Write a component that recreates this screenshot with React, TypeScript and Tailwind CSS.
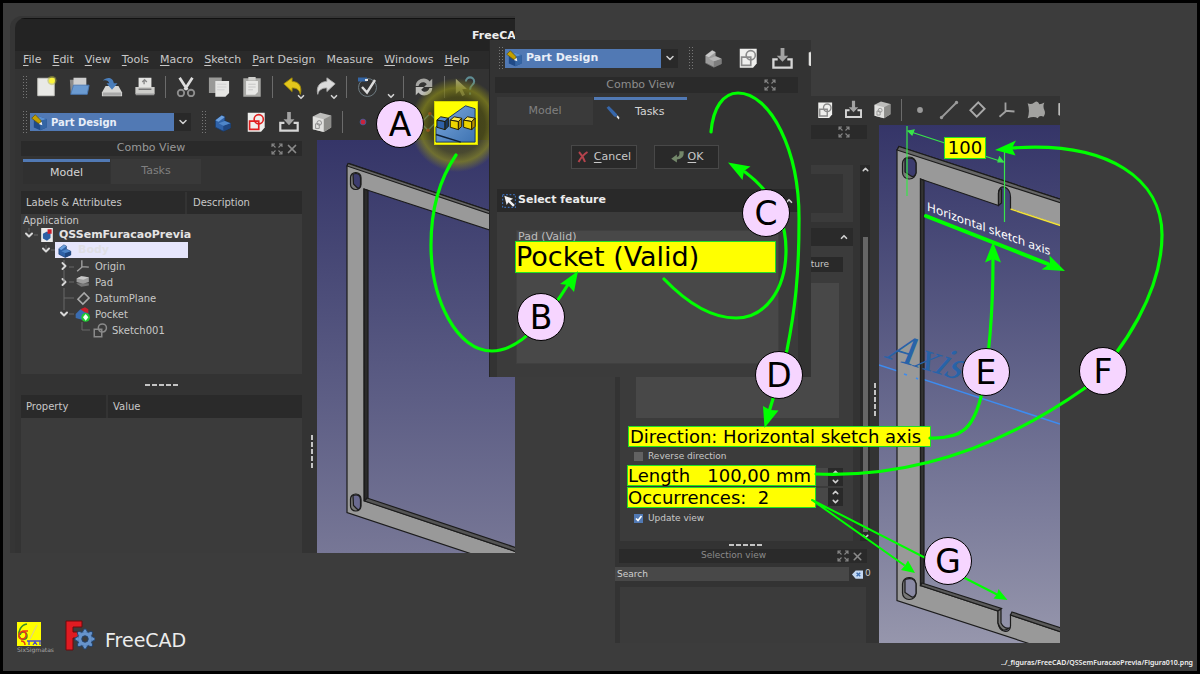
import type { ReactNode } from "react";
import { X, ChevronDown, ChevronUp, ChevronRight } from "lucide-react";

// ---------- icons ----------

const Svg = ({ size, children }: { size: number; children: ReactNode }) => (
  <svg width={size} height={size} viewBox="0 0 24 24" fill="none" className="shrink-0" aria-hidden="true">
    {children}
  </svg>
);

const NewIcon = () => (
  <Svg size={22}>
    <path d="M3 2.500h18v19H3z" fill="#e9e9e6" stroke="#c9c9c4" />
    <circle cx="18.500" cy="5" r="5" fill="#b8b83a" opacity=".5" />
    <circle cx="18.500" cy="5" r="3.200" fill="#fbf43a" />
  </Svg>
);

const OpenIcon = () => (
  <Svg size={22}>
    <path d="M2 4h7l2 2v13H3z" fill="#8b8b8b" />
    <path d="M6 2h14v12H6z" fill="#cfcfcf" />
    <path d="M6 10h17l-2 10H3z" fill="#6b9bd2" stroke="#4b79b4" />
  </Svg>
);

const SaveIcon = () => (
  <Svg size={22}>
    <path d="M5 11h14l4 7v4H1v-4z" fill="#d6d6d4" />
    <path d="M2 18h20v3.500H2z" fill="#a8a8a8" />
    <path d="M2 5c4-4 11-4 12 3h4l-6 7-6-7h3c-1-3-3-4-7-3z" fill="#4a7ebb" />
  </Svg>
);

const PrintIcon = () => (
  <Svg size={22}>
    <path d="M5 2h14v10H5z" fill="#e4e4e2" />
    <path d="M11 9V5M9 6.500l2.500-2.500L14 6.500" stroke="#888" strokeWidth="1.500" />
    <path d="M1.500 12h21v8h-21z" fill="#cdcdca" />
    <path d="M5 14.500h14" stroke="#777" strokeWidth="1.500" />
    <path d="M2 20h20" stroke="#999" strokeWidth="2" />
  </Svg>
);

const CutIcon = () => (
  <Svg size={22}>
    <path d="M5 2l8.500 13M19 2l-8.500 13" stroke="#dedede" strokeWidth="3" />
    <circle cx="6.500" cy="18.500" r="3.500" stroke="#8e8e8e" strokeWidth="2" />
    <circle cx="17.500" cy="18.500" r="3.500" stroke="#8e8e8e" strokeWidth="2" />
  </Svg>
);

const CopyIcon = () => (
  <Svg size={22}>
    <path d="M1 1.500h14v17H1z" fill="#9a9a98" />
    <path d="M8 5.500h15v13l-4 4H8z" fill="#e6e6e4" />
    <path d="M10 9h10M10 12h10M10 15h8" stroke="#cfcfcf" />
  </Svg>
);

const PasteIcon = () => (
  <Svg size={22}>
    <path d="M2.500 2.500h19v20h-19z" fill="#a9a9a6" />
    <path d="M5.500 5.500h13v12l-3 3h-10z" fill="#e8e8e6" />
    <path d="M8 1h8v4H8z" fill="#cfcfcc" />
    <path d="M8 9h8M8 12h8M8 15h5" stroke="#c4c4c4" />
  </Svg>
);

const UndoIcon = () => (
  <Svg size={22}>
    <path d="M2 8.500L11 2v4c8 0 11 6 9 14-1-5-4-7-9-7v4z" fill="#e3c61c" stroke="#a38c08" />
  </Svg>
);

const RedoIcon = () => (
  <Svg size={22}>
    <path d="M22 8.500L13 2v4C5 6 1 12 3 20c1-5 5-7 10-7v4z" fill="#dcdcdc" stroke="#aaa" />
  </Svg>
);

const CheckIcon = () => (
  <Svg size={24}>
    <circle cx="12.500" cy="12.500" r="9" stroke="#6d7a80" strokeWidth="1" />
    <path d="M3 2.500h9v4H3z" fill="#3465a4" />
    <path d="M10 4h3v2h-3z" fill="#e8e8e8" />
    <path d="M7 12l5 5.500L20 5" stroke="#dcdcdc" strokeWidth="2.400" />
  </Svg>
);

const RefreshIcon = () => (
  <Svg size={22}>
    <path d="M3 11C3 3 14 0 18 6l3-3v9h-9l3-3c-3-4-8-2-9 2z" fill="#a5a5a2" />
    <path d="M21 13c0 8-11 11-15 5l-3 3v-9h9l-3 3c3 4 8 2 9-2z" fill="#bdbdba" />
  </Svg>
);

const WhatsThisIcon = () => (
  <Svg size={22}>
    <path d="M2 3l12 11-5 .500 3 6-3 1.500-3-6-4 3.500z" fill="#a3a27c" />
    <path d="M13 6c0-6 9-6 9 0 0 4-4.500 3.500-4.500 9M17.500 18v2.500" stroke="#5f8d94" strokeWidth="2.200" />
  </Svg>
);

const WorkbenchIcon = () => (
  <Svg size={17}>
    <path d="M4 7l9-3 9 3v12l-9 4-9-4z" fill="#204a87" />
    <path d="M13 10l9-3v12l-9 4z" fill="#3465a4" />
    <path d="M4 7l9-3 9 3-9 3z" fill="#5a8fd0" />
    <path d="M1 6l5-5 8 8v4h-4z" fill="#c4a000" stroke="#635405" />
    <path d="M11 14l5 2-1-5z" fill="#eee" />
  </Svg>
);

const BodyIcon = ({ size = 22, gray = false }: { size?: number; gray?: boolean }) => (
  <Svg size={size}>
    <path d="M3 9l8-6 4 2v5l7 3v6l-9 4-10-5z" fill={gray ? "#9c9c9c" : "#2f62a8"} stroke={gray ? "#6e6e6e" : "#173a6b"} />
    <path d="M3 9l8-6 4 2-8 6z" fill={gray ? "#c9c9c9" : "#6da0dd"} />
    <path d="M13 16l9-3v6l-9 4z" fill={gray ? "#7d7d7d" : "#1f4680"} />
    <path d="M7 13l8-3 7 3-9 3z" fill={gray ? "#b5b5b5" : "#4f86c9"} />
  </Svg>
);

const SketchIcon = ({ size = 22, color = "#e02020" }: { size?: number; color?: string }) => (
  <Svg size={size}>
    <path d="M3 2h18.500v16l-4 4.500H3z" fill="#efefed" />
    <path d="M5 11h10v9H5z" stroke={color} strokeWidth="1.800" />
    <circle cx="15" cy="9" r="5" stroke={color} strokeWidth="1.800" />
  </Svg>
);

const ImportIcon = ({ size = 22 }: { size?: number }) => (
  <Svg size={size}>
    <path d="M10 1h4v8h4l-6 6.500L6 9h4z" fill="#a3a3a3" />
    <path d="M7 13H2.500v8.500h19V13H17" stroke="#d6d6d6" strokeWidth="2.400" />
  </Svg>
);

const BoxIcon = ({ size = 22 }: { size?: number }) => (
  <Svg size={size}>
    <path d="M2 6l8-4 12 3v13l-8 5L2 20z" fill="#bdbdbb" />
    <path d="M2 6l12 3v14L2 20z" fill="#e1e1df" />
    <path d="M14 9l8-4v13l-8 5z" fill="#8d8d8a" />
    <path d="M5 14h4v5H5z" stroke="#888" />
    <circle cx="9" cy="13" r="2.500" stroke="#888" />
  </Svg>
);

const DiamondIcon = ({ size = 22, color = "#a9a9a9" }: { size?: number; color?: string }) => (
  <Svg size={size}>
    <path d="M13 3l8 8-10 10-8-8z" stroke={color} strokeWidth="2.400" />
  </Svg>
);

const AxesIcon = ({ size = 22 }: { size?: number }) => (
  <Svg size={size}>
    <path d="M10 2v12l-8 7M10 13l12 1" stroke="#a0a0a0" strokeWidth="2.400" />
  </Svg>
);

const PadIcon = () => (
  <Svg size={14}>
    <path d="M1 15l8 5 13-2v-4H1z" fill="#777" />
    <path d="M1 6l8-4 13 2v8l-10 3L1 12z" fill="#9d9d9d" />
    <path d="M1 6l8-4 13 2-9 4z" fill="#c9c9c9" />
  </Svg>
);

const PocketIcon = () => (
  <Svg size={16}>
    <path d="M1 12l7-7 12 3v8l-8 5L1 18z" fill="#3a6cb0" />
    <path d="M8 5l7-3 5 3v6l-6-2z" fill="#cc1f2b" />
    <circle cx="16" cy="17" r="6.500" fill="#20c832" />
    <path d="M16 12l4 5-4 5-4-5z" fill="#f3fff3" />
  </Svg>
);

const DocIcon = () => (
  <Svg size={14}>
    <path d="M2 0h20v24H2z" fill="#ececec" />
    <path d="M5 10l7-4 6 3v8l-6 5-7-4z" fill="#2c5fa5" />
    <path d="M13 2h7v8h-7z" fill="#cc1f2b" />
  </Svg>
);

const SketchLeafIcon = () => (
  <Svg size={15}>
    <path d="M2 10h12v12H2z" stroke="#8a8a8a" strokeWidth="2.400" />
    <circle cx="15" cy="8" r="6.500" stroke="#8a8a8a" strokeWidth="2.400" />
  </Svg>
);

const FloatIcon = () => (
  <Svg size={12}>
    <path
      d="M2 8V2h6M2 2l7 7M22 8V2h-6M22 2l-7 7M2 16v6h6M2 22l7-7M22 16v6h-6M22 22l-7-7"
      stroke="#858585"
      strokeWidth="2.200"
    />
  </Svg>
);

const cubes = [
  { x: 2, top: "#5a8dd0", face: "#2f62a8", side: "#163965" },
  { x: 16, top: "#fce94f", face: "#edd400", side: "#b79300" },
  { x: 30, top: "#fce94f", face: "#edd400", side: "#b79300" },
];

const PatternIcon = () => (
  <svg viewBox="0 0 44 44" className="size-full" aria-hidden="true">
    <defs>
      <linearGradient id="slope" x1="0" y1="0" x2="1" y2="1">
        <stop offset="0" stopColor="#7ba8dc" />
        <stop offset="1" stopColor="#3e73b2" />
      </linearGradient>
    </defs>
    <path d="M0 0h44v44H0z" fill="#ffff00" />
    <path d="M1 26L32 4l10 3v35H1z" fill="url(#slope)" stroke="#16355e" strokeWidth="1" />
    <path d="M1 34l26 8" stroke="#0d2036" strokeWidth="1.500" />
    {cubes.map((c) => (
      <g key={c.x} transform={`translate(${c.x} 15)`} stroke="#221c02" strokeWidth="1" strokeLinejoin="round">
        <path d="M0 4l4-3.500 8 1.500L8.500 5.500z" fill={c.top} />
        <path d="M0 4l8.500 1.500V14L0 11.500z" fill={c.face} />
        <path d="M8.500 5.500L12 2v8.500L8.500 14z" fill={c.side} />
      </g>
    ))}
  </svg>
);

// ---------- small shared parts ----------

const Handle = () => (
  <span className="grid shrink-0 grid-cols-2 gap-[2px]" aria-hidden="true">
    {Array.from({ length: 16 }, (_, i) => (
      <span key={i} className="size-[1px] bg-[#777]" />
    ))}
  </span>
);

const Separator = () => (
  <span className="flex w-2 shrink-0 justify-center">
    <span className="h-[22px] w-px bg-[#6b6b6b]" />
  </span>
);

const Tool = ({ label, wide = true, menu = false, children }: { label: string; wide?: boolean; menu?: boolean; children: ReactNode }) => (
  <button aria-label={label} className={`relative flex shrink-0 items-center justify-center ${wide ? "w-[33px]" : "w-[29px]"}`}>
    {children}
    {menu && <ChevronDown size={10} strokeWidth={4} className="absolute right-[3px] -bottom-1 text-[#d0d0d0]" />}
  </button>
);

const Dashes = ({ vertical = false }: { vertical?: boolean }) => (
  <span className={`flex gap-[2px] ${vertical ? "flex-col" : ""}`} aria-hidden="true">
    {Array.from({ length: 5 }, (_, i) => (
      <span key={i} className={`bg-[#c4c4c4] ${vertical ? "h-[5px] w-[2px]" : "h-[2px] w-[5px]"}`} />
    ))}
  </span>
);

const WorkbenchSelect = ({ id, size }: { id: string; size: string }) => (
  <label htmlFor={id} className="flex flex-1 items-stretch">
    <span className="flex items-center bg-[#5179b4] pl-px">
      <WorkbenchIcon />
    </span>
    <select id={id} aria-label="Workbench" className={`min-w-0 flex-1 appearance-none bg-[#5179b4] px-[3px] font-bold text-[#e8eef8] ${size}`}>
      <option>Part Design</option>
    </select>
    <span className="flex w-[17px] items-center justify-center bg-[#292929]">
      <ChevronDown size={12} strokeWidth={3} className="text-[#d0d0d0]" />
    </span>
  </label>
);

// ---------- main window ----------

const menus = ["File", "Edit", "View", "Tools", "Macro", "Sketch", "Part Design", "Measure", "Windows", "Help"];

const indents = ["pl-[2px]", "pl-[19px]", "pl-[37px]", "pl-[54px]"];

const tree: { name: string; depth: number; icon: ReactNode; state: "open" | "closed" | "leaf" }[] = [
  { name: "Origin", depth: 2, icon: <AxesIcon size={14} />, state: "closed" },
  { name: "Pad", depth: 2, icon: <PadIcon />, state: "closed" },
  { name: "DatumPlane", depth: 2, icon: <DiamondIcon size={15} />, state: "leaf" },
  { name: "Pocket", depth: 2, icon: <PocketIcon />, state: "open" },
  { name: "Sketch001", depth: 3, icon: <SketchLeafIcon />, state: "leaf" },
];

const Arrow = ({ state }: { state: "open" | "closed" | "leaf" }) => (
  <span className="mr-[5px] flex w-3 shrink-0 justify-center text-[#d8d8d8]">
    {state === "open" && <ChevronDown size={12} strokeWidth={4} />}
    {state === "closed" && <ChevronRight size={12} strokeWidth={4} />}
  </span>
);

const MainView = () => (
  <svg viewBox="317 140 198 413" className="block size-full" aria-label="3D view" role="img">
    <g stroke="#1c1c1c" strokeWidth="1.200">
      <path d="M347 166L349 163.500 520 221V240L364 189V500.500L520 553V570L347 512.500z" fill="#999" />
      <path d="M348 163.500L520 221V224L347 166z" fill="#666" />
      <path d="M364 189l4 1.500V498.500l-3.500 2z" fill="#2b2b2b" />
      <path d="M367 498L520 549V553L364.500 501z" fill="#555" />
      {[181, 502.5].map((y) => (
        <g key={y}>
          <rect x="350.500" y={y - 8.5} width="10.500" height="17" rx="5" fill="#777" />
          <path d={`M353 ${y - 7}q7-2 7.500 4v7q-1 5-4 2l-3-3z`} fill={y < 300 ? "#3c3c6e" : "#6a6a90"} />
        </g>
      ))}
    </g>
  </svg>
);

const MainWindow = () => (
  <section className="absolute top-[18px] left-[15px] flex h-[535px] w-[500px] flex-col overflow-hidden rounded-tl-[10px] bg-[#333] text-[10px] text-[#c8c8c8]">
    <header className="h-[33px] shrink-0 border-t border-[#111] bg-[#232323] pl-[457px] text-[11px] leading-[33px] font-bold whitespace-nowrap text-[#eee]">
      FreeCAD
    </header>
    <nav className="flex h-[18px] shrink-0 items-center gap-[11px] bg-[#2a2a2a] pl-2 text-[11px]">
      {menus.map((m) => (
        <button key={m} className="shrink-0">
          {m === "Measure" ? m : <><u className="underline-offset-2">{m[0]}</u>{m.slice(1)}</>}
        </button>
      ))}
    </nav>
    <div className="flex h-[35px] shrink-0 items-center">
      <span className="flex w-[14px] justify-end pr-[2px]"><Handle /></span>
      <Tool label="New"><NewIcon /></Tool>
      <Tool label="Open"><OpenIcon /></Tool>
      <Tool label="Save"><SaveIcon /></Tool>
      <Tool label="Print"><PrintIcon /></Tool>
      <Separator />
      <Tool label="Cut"><CutIcon /></Tool>
      <Tool label="Copy"><CopyIcon /></Tool>
      <Tool label="Paste"><PasteIcon /></Tool>
      <Separator />
      <Tool label="Undo" menu><UndoIcon /></Tool>
      <Tool label="Redo" menu><RedoIcon /></Tool>
      <Separator />
      <Tool label="Check geometry"><CheckIcon /></Tool>
      <span className="flex h-5 w-4 items-end justify-center"><ChevronDown size={10} strokeWidth={4} className="-mb-1 text-[#d0d0d0]" /></span>
      <Separator />
      <Tool label="Refresh"><RefreshIcon /></Tool>
      <Separator />
      <Tool label="What's this?"><WhatsThisIcon /></Tool>
    </div>
    <div className="flex h-9 shrink-0 items-center">
      <span className="flex w-[14px] justify-end pr-[2px]"><Handle /></span>
      <div className="ml-px flex h-[18px] w-[161px]">
        <WorkbenchSelect id="workbench-main" size="text-[10px]" />
      </div>
      <span className="flex w-[15px] justify-end"><Handle /></span>
      <Tool label="Create body"><BodyIcon size={19} /></Tool>
      <Tool label="Create sketch"><SketchIcon /></Tool>
      <Tool label="Import"><ImportIcon /></Tool>
      <Tool label="Map sketch"><BoxIcon /></Tool>
      <Separator />
      <Tool label="Datum point">
        <Svg size={20}><circle cx="12" cy="12" r="3.500" fill="#c8243c" stroke="#3a5fa0" /></Svg>
      </Tool>
      <Tool label="Datum line">
        <Svg size={22}><path d="M3 21L21 3" stroke="#aaa" strokeWidth="2" /></Svg>
      </Tool>
      <Tool label="Datum plane">
        <Svg size={22}>
          <path d="M13 3l8 8-10 10-8-8z" stroke="#6ca0a8" strokeWidth="1.500" />
          <circle cx="13" cy="3" r="2" fill="#d8402c" />
          <circle cx="11" cy="21" r="2" fill="#d8402c" />
        </Svg>
      </Tool>
    </div>
    {/* yellow glow around the highlighted pattern tool */}
    <div className="absolute top-[59px] left-[394px] size-[96px] bg-[radial-gradient(circle,rgba(60,60,0,.45)_0,rgba(85,85,10,.6)_28px,rgba(135,135,25,.7)_37px,rgba(120,120,20,0)_47px)]" />
    <div className="flex min-h-0 flex-1">
      <div className="flex w-[287px] shrink-0 flex-col pl-[6px]">
        <div className="relative mt-[1px] flex h-[15px] items-center justify-center bg-[#2a2a2a] pr-[21px] text-[11px] text-[#999]">
          Combo View
          <span className="absolute right-[3px] flex items-center gap-[2px]">
            <FloatIcon />
            <X size={14} strokeWidth={3} className="text-[#8a8a8a]" />
          </span>
        </div>
        <div className="mt-[3px] flex h-[25px] pl-[2px] text-[11px]" role="tablist">
          <button role="tab" aria-selected="true" className="w-[87px] border-t-3 border-[#5179b4] bg-[#303030] text-[#d5d5d5]">Model</button>
          <button role="tab" aria-selected="false" className="ml-px w-[90px] bg-[#393939] text-[#808080]">Tasks</button>
        </div>
        <div className="mt-[7px] flex h-[23px] items-center bg-[#2a2a2a]">
          <span className="w-[166px] border-r-2 border-[#333] pl-[5px] leading-[22px]">Labels &amp; Attributes</span>
          <span className="pl-[6px]">Description</span>
        </div>
        <ul className="relative h-[160px] bg-[#3b3b3b]" role="tree">
          <svg viewBox="0 0 120 160" className="absolute top-0 left-0 h-[160px] w-[120px]" stroke="#686868" fill="none" aria-hidden="true">
            <path d="M8 14v4M13 21h4M25 31v4M30 36h4M43 46v3M43 56v12M43 74v22M48 53h5M48 68h5M43 84h10M48 100h5M61 108v8h8" />
          </svg>
          <li className="h-[14px] pl-[2px] leading-[14px]">Application</li>
          <li className="flex h-[14px] items-center pl-[2px]">
            <Arrow state="open" />
            <DocIcon />
            <b className="pl-[5px] text-[11px] text-[#e4e4e4]">QSSemFuracaoPrevia</b>
          </li>
          <li className="flex h-4 items-center pl-[19px]">
            <Arrow state="open" />
            <span className="-ml-[2px] flex h-4 w-[133px] items-center bg-[#e6e6fc] pl-[2px]">
              <BodyIcon size={15} />
              <b className="pl-[6px] text-[11px] text-[#dfdfe6]">Body</b>
            </span>
          </li>
          {tree.map((n) => (
            <li key={n.name} className={`flex h-4 items-center ${indents[n.depth]}`}>
              <Arrow state={n.state} />
              <span className="flex w-4 justify-center">{n.icon}</span>
              <span className="pl-1">{n.name}</span>
            </li>
          ))}
        </ul>
        <div className="flex h-[21px] shrink-0 items-center justify-center"><Dashes /></div>
        <table className="w-full border-collapse">
          <thead>
            <tr className="h-[23px] bg-[#2a2a2a] text-left">
              <th className="w-[86px] border-r-2 border-[#333] pl-[5px] font-normal">Property</th>
              <th className="pl-[5px] font-normal">Value</th>
            </tr>
          </thead>
        </table>
        <div className="flex-1 bg-[#3b3b3b]" />
      </div>
      <div className="flex w-[15px] shrink-0 flex-col items-center pt-[295px] pl-[5px]"><Dashes vertical /></div>
      <div className="flex-1 bg-linear-to-b from-[#353568] to-[#777796]"><MainView /></div>
    </div>
  </section>
);

// ---------- pattern parameters window ----------

const SpinButtons = () => (
  <span className="flex h-[18px] w-[15px] shrink-0 flex-col items-center justify-center bg-[#292929] text-[#d0d0d0]">
    <ChevronUp size={9} strokeWidth={4} />
    <ChevronDown size={9} strokeWidth={4} />
  </span>
);

const PatternView = () => (
  <svg viewBox="879 125 181 518" className="block size-full" aria-label="3D view" role="img">
    <path d="M879 365L1060 424" stroke="#3d8cf0" strokeWidth="1.500" />
    <g stroke="#1c1c1c" strokeWidth="1.200">
      <path
        d="M897 150L899 146.500 1064 200.500V227L1010.500 209V197c0-11-12-14-12-4v12.500L920.500 179V585.500L998 611v12c1 9 12 12 12.500 3V615L1064 633V655L897 600.500z"
        fill="#999"
      />
      <path d="M899 146.500L1064 200.500V204L897 150z" fill="#666" />
      <path d="M920.500 179l3.500 1.500V583l-3.500 2.500z" fill="#333" />
      <path d="M922 583L1001.500 608.500 998 611 920.500 585.500zM1012 612L1064 629V633L1010.500 615z" fill="#5a5a5a" />
      <path d="M998.500 205.500V193q1-5 3-4v14z" fill="#555" />
      <path d="M998 611l3-2v14q3 6 8 5-7 6-11-5z" fill="#777" />
      {[168, 588.5].map((y) => (
        <g key={y}>
          <rect x="902.500" y={y - 11} width="13.500" height="22" rx="6.500" fill="#777" />
          <path d={`M905 ${y - 9}q9-3 11 4v10q-2 5-5 3l-6-4z`} fill={y < 300 ? "#3c3c6e" : "#8a8aa4"} />
        </g>
      ))}
    </g>
    <path d="M1010.500 209L1062 226" stroke="#f0e040" strokeWidth="1.600" />
    <text
      fontSize="41"
      fill="#2863a8"
      className="font-['Liberation_Serif',serif]"
      transform="translate(883 357) rotate(17) skewX(-24)"
    >
      Axis
    </text>
    <path d="M904 374l3 1M916 378l2 1" stroke="#3d8cf0" strokeWidth="1.500" />
    <g stroke="#38e64a" strokeWidth="1.200" fill="#38e64a">
      <path d="M907 126v70M1004.500 150v72M908 131l95 31" />
      <path d="M908 131l6-1-2 5zM1003.500 162l-4-5-1.500 5z" />
    </g>
  </svg>
);

const PatternWindow = () => (
  <section className="absolute top-[96px] left-[615px] flex h-[547px] w-[445px] flex-col overflow-hidden bg-[#333] text-[9px] text-[#c8c8c8]">
    <div className="flex h-[27px] shrink-0 items-center pl-[195px]">
      <Tool label="Create sketch" wide={false}><SketchIcon size={18} color="#8a8a8a" /></Tool>
      <Tool label="Import" wide={false}><ImportIcon size={19} /></Tool>
      <Tool label="Map sketch" wide={false}><BoxIcon size={19} /></Tool>
      <Separator />
      <Tool label="Datum point" wide={false}>
        <Svg size={20}><circle cx="12" cy="12" r="3.500" fill="#9a9a9a" /></Svg>
      </Tool>
      <Tool label="Datum line" wide={false}>
        <Svg size={20}>
          <path d="M3 21L21 3" stroke="#9a9a9a" strokeWidth="2.200" />
          <circle cx="3" cy="21" r="2" fill="#9a9a9a" />
          <circle cx="21" cy="3" r="2" fill="#9a9a9a" />
        </Svg>
      </Tool>
      <Tool label="Datum plane" wide={false}><DiamondIcon size={19} /></Tool>
      <Tool label="Local coordinate system" wide={false}><AxesIcon size={18} /></Tool>
      <Tool label="Shape binder" wide={false}>
        <Svg size={20}><path d="M2 4q4 2 8-1t6 2q3 0 6-2-2 5 0 9t-1 8q-5-2-7 2-4-3-12 0 3-9 0-18z" fill="#a2a2a0" /></Svg>
      </Tool>
      <Tool label="Clone" wide={false}>
        <Svg size={20}><path d="M4 4l9-2 8 3v12l-9 5-8-4z" fill="#bcbcba" /></Svg>
      </Tool>
    </div>
    <div className="flex min-h-0 flex-1 pt-[2px]">
      <div className="flex w-[264px] shrink-0 flex-col">
        <div className="ml-1 flex h-[14px] w-[248px] shrink-0 items-center justify-end bg-[#2a2a2a] pr-[17px]"><FloatIcon /></div>
        <div className="mt-[26px] flex h-[376px] shrink-0">
          <div className="ml-[5px] flex w-[233px] flex-col">
            <div className="h-[57px] shrink-0 bg-[#3b3b3b] px-[10px] py-[9px]"><div className="h-full bg-[#333]" /></div>
            <div className="mt-[6px] flex h-[18px] shrink-0 items-center justify-end bg-[#2a2a2a] pr-1">
              <ChevronUp size={10} strokeWidth={4} className="text-[#d0d0d0]" />
            </div>
            <div className="flex flex-1 flex-col bg-[#3b3b3b] pr-[10px] pl-[7px]">
              <button className="mt-[11px] h-[15px] w-[110px] self-end bg-[#292929] pr-[14px] text-right">Remove feature</button>
              <div className="mt-[11px] mr-1 ml-[9px] h-[135px] shrink-0 bg-[#484848]" />
              <label className="mt-[32px] flex h-3 items-center gap-[5px] pl-[7px] leading-3">
                <input type="checkbox" className="size-[9px] appearance-none bg-[#626262]" />
                Reverse direction
              </label>
              <div className="mt-[6px] flex h-[18px] items-center">
                <input aria-label="Length" defaultValue="100,00 mm" className="h-[18px] min-w-0 flex-1 bg-[#484848] pl-[80px]" />
                <SpinButtons />
              </div>
              <div className="mt-[2px] flex h-[18px] items-center">
                <input aria-label="Occurrences" defaultValue="2" className="h-[18px] min-w-0 flex-1 bg-[#484848] pl-[80px]" />
                <SpinButtons />
              </div>
              <label className="mt-[6px] flex h-3 items-center gap-[5px] pl-[7px] leading-3">
                <span className="relative flex">
                  <input type="checkbox" defaultChecked className="size-[9px] appearance-none bg-[#5179b4]" />
                  <svg viewBox="0 0 9 9" className="pointer-events-none absolute size-[9px]" fill="none" aria-hidden="true">
                    <path d="M2 4.500l2 2L7.500 2" stroke="#fff" strokeWidth="1.600" />
                  </svg>
                </span>
                Update view
              </label>
            </div>
          </div>
          <div className="ml-[7px] flex w-[10px] flex-col items-center bg-[#292929] text-[#d0d0d0]">
            <ChevronUp size={9} strokeWidth={4} className="shrink-0" />
            <span className="mt-[63px] w-[5px] flex-1 bg-[#666]" />
            <ChevronDown size={9} strokeWidth={4} className="shrink-0" />
          </div>
        </div>
        <div className="flex h-[8px] shrink-0 items-center pl-[114px]"><Dashes /></div>
        <div className="relative ml-1 flex h-[14px] w-[248px] shrink-0 items-center justify-center bg-[#2a2a2a] pr-[19px] text-[#8a8a8a]">
          Selection view
          <span className="absolute right-[3px] flex items-center gap-[2px]">
            <FloatIcon />
            <X size={13} strokeWidth={3} />
          </span>
        </div>
        <div className="mt-1 flex h-[14px] shrink-0 items-center">
          <input aria-label="Search" placeholder="Search" className="h-[14px] w-[234px] bg-[#484848] pl-[2px] placeholder:text-[#d0d0d0]" />
          <button aria-label="Clear" className="ml-[3px]">
            <Svg size={11}>
              <path d="M0 12l8-9h16v18H8z" fill="#c4d8f2" />
              <path d="M10 8l8 8M18 8l-8 8" stroke="#3f6fb0" strokeWidth="3" />
            </Svg>
          </button>
          <span className="pl-[2px]">0</span>
        </div>
        <div className="mt-[6px] ml-[5px] w-[246px] flex-1 bg-[#3b3b3b]" />
      </div>
      <div className="flex-1 bg-linear-to-b from-[#353568] to-[#9696ac]"><PatternView /></div>
    </div>
    <div className="absolute top-[287px] left-[259px]"><Dashes vertical /></div>
  </section>
);

// ---------- feature selection window ----------

const TasksWindow = () => (
  <section className="absolute top-[40px] left-[489px] flex h-[337px] w-[322px] flex-col overflow-hidden border-l border-[#262626] bg-[#333] text-[11px] text-[#c8c8c8]">
    <div className="flex h-9 shrink-0 items-center">
      <span className="flex w-[13px] justify-end"><Handle /></span>
      <div className="ml-[2px] flex h-[19px] w-[173px]">
        <WorkbenchSelect id="workbench-tasks" size="text-[11px]" />
      </div>
      <span className="flex w-[15px] justify-end"><Handle /></span>
      <span className="flex w-[118px] shrink-0 pl-[2px] *:w-[35px]">
        <Tool label="Create body"><BodyIcon size={20} gray /></Tool>
        <Tool label="Create sketch"><SketchIcon color="#8a8a8a" /></Tool>
        <Tool label="Import"><ImportIcon size={23} /></Tool>
        <Tool label="Map sketch"><BoxIcon /></Tool>
      </span>
    </div>
    <div className="relative mt-[1px] ml-[5px] flex h-4 w-[303px] shrink-0 items-center justify-center bg-[#2a2a2a] pr-[12px] text-[#8d8d8d]">
      Combo View
      <span className="absolute right-[22px]"><FloatIcon /></span>
    </div>
    <div className="mt-1 ml-[7px] flex h-7 shrink-0" role="tablist">
      <button role="tab" aria-selected="false" className="w-[96px] bg-[#3a3a3a] text-[#808080]">Model</button>
      <button role="tab" aria-selected="true" className="ml-px flex w-[93px] items-center gap-[15px] border-t-3 border-[#5179b4] pl-3 text-[#d5d5d5]">
        <Svg size={14}>
          <path d="M1 3l4-3 14 14-1 5-4-1z" fill="#3767ab" />
          <path d="M18 19l4 4 1-3-3-4z" fill="#eee" />
        </Svg>
        Tasks
      </button>
    </div>
    <div className="mt-5 flex shrink-0 gap-[17px] pl-[81px]">
      <button className="flex h-6 w-[66px] items-center justify-center gap-[5px] border border-[#484848] bg-[#292929]">
        <Svg size={12}><path d="M4 2q8 8 12 20M21 2Q11 8 3 22" stroke="#b5434c" strokeWidth="4" /></Svg>
        <span><u className="underline-offset-2">C</u>ancel</span>
      </button>
      <button className="flex h-6 w-[65px] items-center justify-center gap-[3px] border border-[#484848] bg-[#292929]">
        <Svg size={15}><path d="M15 2h7q1 13-11 13v5L2 14l9-7v4q5 0 4-9z" fill="#73876a" /></Svg>
        <span><u className="underline-offset-2">O</u>K</span>
      </button>
    </div>
    <div className="mt-5 ml-[7px] flex h-[23px] w-[301px] shrink-0 items-center gap-[2px] bg-[#292929] pl-[5px] font-bold text-[#ececec]">
      <Svg size={14}>
        <path d="M1 1h22v22H1z" stroke="#3b6bb0" strokeWidth="2" strokeDasharray="3 3" />
        <path d="M4 3l15 5-5 3 8 8-3 3-8-8-3 5z" fill="#f2f2f2" />
      </Svg>
      Select feature
      <ChevronUp size={10} strokeWidth={4} className="mr-1 ml-auto text-[#d0d0d0]" />
    </div>
    <div className="ml-[7px] w-[301px] flex-1 bg-[#3b3b3b] px-[19px] pt-[18px] pb-[13px]">
      <ul className="h-full border border-[#404040] bg-[#484848] pl-px text-[#bdbdbd]">
        <li className="h-3 leading-3">Pad (Valid)</li>
      </ul>
    </div>
  </section>
);

// ---------- annotations drawn over the windows ----------

const steps = [
  { name: "A", at: "top-[100px] left-[376px]" },
  { name: "B", at: "top-[293px] left-[517px]" },
  { name: "C", at: "top-[189px] left-[742px]" },
  { name: "D", at: "top-[351px] left-[755px]" },
  { name: "E", at: "top-[348px] left-[962px]" },
  { name: "F", at: "top-[347px] left-[1079px]" },
  { name: "G", at: "top-[537px] left-[924px]" },
];

const Connectors = () => (
  <svg width="1200" height="674" viewBox="0 0 1200 674" className="pointer-events-none absolute top-0 left-0" fill="none" aria-hidden="true">
    <g stroke="#00ff00" strokeWidth="3.200" strokeLinecap="round">
      <path d="M456 155C439 180 431 212 431 245C431 300 457 351 492 351C515 351 540 330 569 283" />
      <path d="M664 279C690 306 715 318 736 318C765 318 786 290 786 250C786 215 769 190 745 172" />
      <path d="M711 132C713 108 723 93 738 93C770 93 800 150 799 222C799 275 795 310 787 350C781 375 773 398 769 412" />
      <path d="M930 438C962 439 973 428 981 397C988 365 993 320 993 258" />
      <path d="M926 216L1048 264" strokeWidth="4" />
      <path d="M816 474C910 478 1000 448 1085 388C1125 350 1162 290 1162 235C1162 180 1110 141 1012 148" />
      <path d="M812 500L904 565M812 500L998 595" strokeWidth="2" />
    </g>
    <g fill="#00ff00">
      <path d="M578 271L560 284 568 285 574 292z" />
      <path d="M728 162.500L750.500 166.500 744 171 742.500 180z" />
      <path d="M764.500 428L763 406 770 410 778.500 410.500z" />
      <path d="M993 242L985 262.500 993 259 1001 262.500z" />
      <path d="M1065 271L1049.500 255.500 1050 264 1041.500 269.500z" />
      <path d="M995 150L1016 140.500 1012 148 1015.500 155.500z" />
      <path d="M915 573L901 570 905 565.500 908 560.500z" />
      <path d="M1007.500 600L993.500 598.500 997 594.500 998.500 589z" />
    </g>
  </svg>
);

const note = "absolute border border-[#22e022] bg-[#ffff00] whitespace-pre text-black";

const App = () => {
  return (
    <main className="relative min-h-screen overflow-hidden bg-[#3c3c3c] font-['DejaVu_Sans',sans-serif] shadow-[inset_0_0_0_3px_#000]">
      <div className="absolute top-[16px] left-[10px] h-[537px] w-[505px] rounded-tl-[12px] bg-[#353535]" />
      <MainWindow />
      <PatternWindow />
      <TasksWindow />

      <div className="absolute top-[101px] left-[434px] size-11 border border-[#d8d800]"><PatternIcon /></div>
      <p className={`${note} top-[241px] left-[515px] h-[32px] w-[261px] text-[27px] leading-[29px]`}>Pocket (Valid)</p>
      <p className={`${note} top-[426px] left-[628px] h-[21px] w-[303px] pl-px text-[18px] leading-[19px]`}>Direction: Horizontal sketch axis</p>
      <p className={`${note} top-[465px] left-[627px] h-[21px] w-[189px] text-[18px] leading-[19px]`}>Length   100,00 mm</p>
      <p className={`${note} top-[487px] left-[627px] h-[21px] w-[189px] text-[18px] leading-[19px]`}>Occurrences:  2</p>
      <p className={`${note} top-[137px] left-[944px] h-[22px] w-[42px] text-center text-[18px] leading-[20px]`}>100</p>
      <p className="absolute top-[221px] left-[927px] skew-y-[20deg] font-['Noto_Sans',sans-serif] text-[12px] leading-4 whitespace-nowrap text-white">
        Horizontal sketch axis
      </p>

      <Connectors />
      {steps.map((s) => (
        <span
          key={s.name}
          className={`absolute flex size-12 items-center justify-center rounded-full border border-black bg-[#f6d5ff] text-[33px] leading-none text-black ${s.at}`}
        >
          {s.name}
        </span>
      ))}

      <footer className="absolute right-[7px] bottom-[6px] left-[17px] flex items-end">
        <div className="mb-[15px] w-[40px]">
          <svg viewBox="0 0 24 24" className="size-6" fill="none" aria-hidden="true">
            <path d="M0 0h24v24H0z" fill="#ffff00" />
            <path d="M10 2C4 3 1 9 2 14c2 5 8 4 8 0 0-5-6-5-7-1" stroke="#3c8c28" strokeWidth="1.500" />
            <path d="M11 9H6c-6 2-5 9 0 8 5-2 3-8 0-7M4 19q4 0 4 4" stroke="#e83a18" strokeWidth="1.500" />
            <path d="M20 3l-7 14" stroke="#d8c8a0" />
            <path d="M10 19h14M12 19v4M16 23l2-3 2 3M23 19v4" stroke="#4848d0" strokeWidth="1.300" />
          </svg>
          <span className="block text-[6px] leading-[7px] text-[#a8a8a8]">SixSigmatas</span>
        </div>
        <svg viewBox="0 0 30 32" className="mb-[16px] ml-[8px] h-8 w-[30px]" aria-hidden="true">
          <path d="M1 1h16v6H8v5h7v6H8v12H1z" fill="#e01b22" stroke="#6b0a0c" />
          <g transform="translate(20 19)" fill="#6794cc" stroke="#23446e">
            {[0, 45, 90, 135, 180, 225, 270, 315].map((a) => (
              <path key={a} d="M-3-6L-1-10h2l2 4z" transform={`rotate(${a})`} />
            ))}
            <circle r="7" stroke="none" />
            <circle r="3.200" fill="#3c3c3c" />
          </g>
        </svg>
        <span className="mb-[16px] ml-[10px] text-[19px] leading-[24px] text-[#ececec]">FreeCAD</span>
        <span className="ml-auto font-['Noto_Sans',sans-serif] text-[7px] leading-[10px] font-semibold text-[#f0f0f0]">
          ../_figuras/FreeCAD/QSSemFuracaoPrevia/Figura010.png
        </span>
      </footer>
    </main>
  );
};

export default App;
